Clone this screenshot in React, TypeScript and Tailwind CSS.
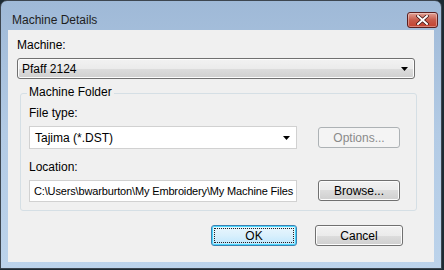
const font = { fontFamily: '"Liberation Sans", "Noto Sans", sans-serif' }

function Arrow() {
  return (
    <svg width="7" height="4" viewBox="0 0 7 4" className="shrink-0">
      <path d="M0 0 H7 L3.5 4 Z" fill="#000" />
    </svg>
  )
}

function CloseButton() {
  return (
    <div className="w-[31px] h-[16px] mt-[11px] mr-[3px] rounded-[3px] border border-[#5a1f1f] bg-gradient-to-b from-[#e0a196] via-[#c75a4a] to-[#c4412f] flex items-center justify-center shadow-[inset_0_0_0_1px_rgba(255,255,255,0.35)]">
      <svg width="13" height="10" viewBox="0 0 13 10">
        <path d="M2 1 L11 9 M11 1 L2 9" stroke="#3a1010" strokeWidth="3.4" strokeLinecap="square" />
        <path d="M2 1 L11 9 M11 1 L2 9" stroke="#fff" strokeWidth="2" strokeLinecap="square" />
      </svg>
    </div>
  )
}

function Button({ label, disabled, focused, w }: { label: string; disabled?: boolean; focused?: boolean; w: string }) {
  if (disabled) {
    return (
      <div className={`${w} h-[21px] rounded-[3px] border border-[#adb2b5] bg-[#f4f4f4] text-[#8a8a8a] flex items-center justify-center`}>
        {label}
      </div>
    )
  }
  if (focused) {
    return (
      <div className={`${w} h-[21px] rounded-[3px] border border-[#3c7fb1] bg-gradient-to-b from-[#eaf6fd] via-[#d9f0fc] to-[#bee6fd] p-[2px] shadow-[inset_0_0_0_1px_#48d8fd]`}>
        <div className="w-full h-full border border-dotted border-[#222] flex items-center justify-center text-black">{label}</div>
      </div>
    )
  }
  return (
    <div className={`${w} h-[21px] rounded-[3px] border border-[#707070] bg-[linear-gradient(#f2f2f2_0%,#ebebeb_50%,#dddddd_50%,#cfcfcf_100%)] shadow-[inset_0_0_0_1px_#fcfcfc] flex items-center justify-center text-black`}>
      {label}
    </div>
  )
}

export default function App() {
  return (
    <div className="w-[444px] h-[270px] bg-[#1c2a33] text-[12px] text-black" style={font}>
      <div className="w-[442px] h-[269px] rounded-t-[7px] border border-[#3d4650] bg-gradient-to-b from-[#9fb9d7] via-[#b3cbe5] to-[#bcd3eb] flex flex-col">
        {/* Title bar */}
        <div className="h-[29px] flex justify-between">
          <div className="pl-[11px] pt-[10px] text-[12px] text-[#1e1e1e]">Machine Details</div>
          <CloseButton />
        </div>

        {/* Client area */}
        <div className="mx-[7px] h-[232px] bg-[#f0f0f0] flex flex-col pl-[9px] pr-[19px]">
          <div className="mt-[8px] h-[15px] leading-[15px]">Machine:</div>
          <div className="mt-[5px] h-[21px] rounded-[3px] border border-[#707070] bg-[linear-gradient(#f2f2f2_0%,#ebebeb_50%,#dddddd_50%,#cfcfcf_100%)] shadow-[inset_0_0_0_1px_#fcfcfc] flex items-center justify-between pl-[4px] pr-[6px]">
            <span>Pfaff 2124</span>
            <Arrow />
          </div>

          {/* Group box */}
          <div className="mt-[14px] ml-[3px] mr-[-2px] h-[118px] rounded-[3px] border border-[#d5dfe5] relative pl-[8px] pr-[16px] pt-[12px] flex flex-col">
            <span className="absolute left-[6px] top-[-9px] bg-[#f0f0f0] px-[2px] leading-[15px]">Machine Folder</span>
            <div className="h-[15px] leading-[15px]">File type:</div>
            <div className="mt-[5px] flex items-start justify-between">
              <div className="w-[268px] h-[23px] border border-[#d1d1d1] bg-white flex items-center justify-between pl-[5px] pr-[6px]">
                <span>Tajima (*.DST)</span>
                <Arrow />
              </div>
              <div className="mt-[1px]">
                <Button label="Options..." disabled w="w-[82px]" />
              </div>
            </div>
            <div className="mt-[11px] h-[15px] leading-[15px]">Location:</div>
            <div className="mt-[5px] flex items-start justify-between">
              <div className="w-[268px] h-[22px] border border-[#d1d1d1] bg-white flex items-center pl-[4px] whitespace-nowrap overflow-hidden text-[11px] tracking-[-0.15px]">
                C:\Users\bwarburton\My Embroidery\My Machine Files
              </div>
              <Button label="Browse..." w="w-[82px]" />
            </div>
          </div>

          <div className="mt-[14px] flex justify-end gap-[18px] pr-[12px]">
            <Button label="OK" focused w="w-[86px]" />
            <Button label="Cancel" w="w-[88px]" />
          </div>
        </div>
      </div>
    </div>
  )
}
